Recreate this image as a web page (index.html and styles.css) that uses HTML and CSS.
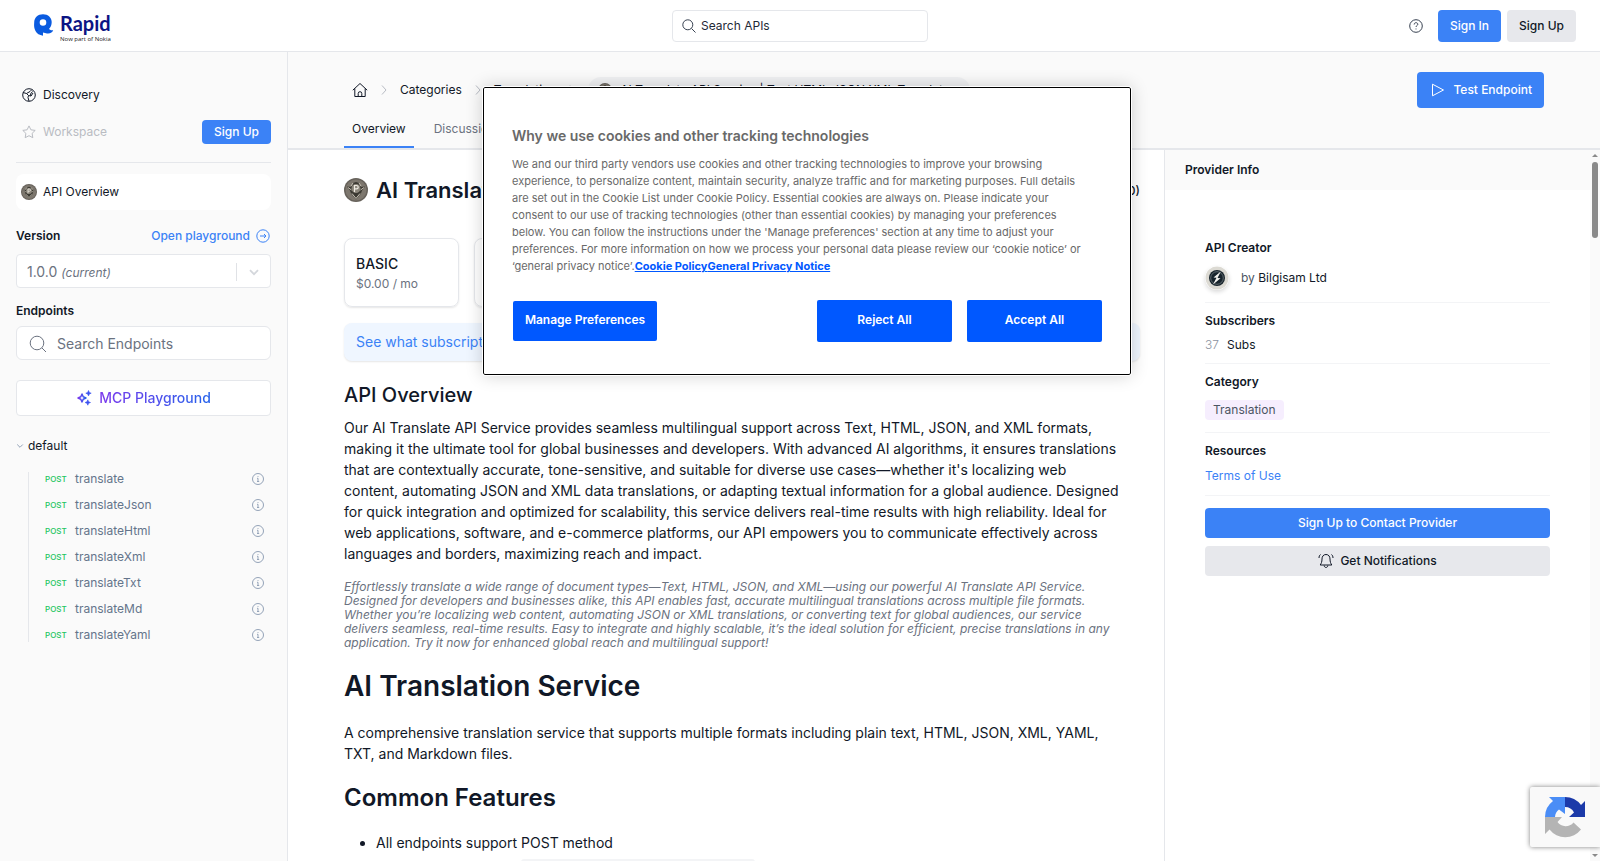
FILE: index.html
```html
<!DOCTYPE html>
<html lang="en">
<head>
<meta charset="utf-8">
<title>AI Translate API Service</title>
<link rel="stylesheet" href="styles.css">
</head>
<body>
<svg class="sprite" aria-hidden="true">
  <symbol id="info" viewBox="0 0 14 14"><circle cx="7" cy="7" r="5.5"/><path d="M6 6.300h1v3M6 9.500h2.200M7 4.200v.8"/></symbol>
  <symbol id="medal" viewBox="0 0 24 24"><circle cx="12" cy="12" r="12" fill="#67625b"/><circle cx="12" cy="12" r="10.500" fill="#7d776e"/><path d="M3 8.500l4 .5 2-4 3-1 3 1 2 4 4-.5-3 4-1 3-5 6-5-6-1-3z" fill="#3b3932"/><path d="M4 9.500l3.500 2.500M20 9.500L16.500 12M12 20.500l-4-5M12 20.500l4-5M7 8l2-3M17 8l-2-3" stroke="#c9c3b6" fill="none"/><circle cx="12" cy="10.500" r="4.500" fill="#8b867b"/><path d="M10.500 14V7.500h2a1.600 1.600 0 010 3.400h-2" stroke="#efebe2" stroke-width="1.200" fill="none"/></symbol>
  <symbol id="chev" viewBox="0 0 8 12"><path d="M2 1.500L6 6 2 10.500"/></symbol>
</svg>
<header class="topbar">
  <a class="logo" href="#" aria-label="Rapid">
    <svg width="20" height="22" viewBox="0 0 20 22"><path fill="#0a5be0" fill-rule="evenodd" d="M1.500 17C-.5 13 .2 10 .2 8.500.2 3.500 3.800.2 9 .2c5.200 0 8.700 3.500 8.700 7.800 0 3-1 5.300-2.700 7 1.200 1.200 2.600 1.500 4.200 1.200-.6 2.200-3 3.600-6.200 3.200L9 18.500v3.300C5.500 21 2.800 19.800 1.500 17zM9 5.200a3.300 3.300 0 100 6.600 3.300 3.300 0 000-6.600z"/></svg>
    <span class="logo-text"><b>Rapid</b><small>Now part of Nokia</small></span>
  </a>
  <label class="top-search">
    <svg width="16" height="16" viewBox="0 0 16 16"><circle cx="6.800" cy="6.800" r="5"/><path d="M10.500 10.500l4 4"/></svg>
    <input type="text" placeholder="Search APIs" aria-label="Search APIs">
  </label>
  <div class="top-actions">
    <svg class="help" width="16" height="16" viewBox="0 0 16 16"><circle cx="8" cy="8" r="6.300"/><path d="M6.200 6.500c0-1.200.8-1.800 1.800-1.800s1.800.6 1.800 1.600c0 1.300-1.800 1.300-1.800 2.700M8 10.500v.9"/></svg>
    <button class="btn blue">Sign In</button>
    <button class="btn grey">Sign Up</button>
  </div>
</header>
<div class="shell">
  <aside class="sidebar">
    <a class="side-row" href="#">
      <svg class="line" width="14" height="14" viewBox="0 0 14 14"><circle cx="7" cy="7" r="6.300"/><path d="M1 4.500l3.500 1 2 2-.5 2L7 13M4.500 5.500L8 3.500 10 1.500M10.500 3.500L8.500 6l.5 2M6.500 7.500L9 8l2-3"/></svg>Discovery</a>
    <div class="side-row muted">
      <svg class="line" width="14" height="14" viewBox="0 0 14 14"><path d="M7 .9l1.900 3.900 4.300.6-3.100 3 .7 4.300L7 10.700l-3.800 2 .7-4.300-3.100-3 4.300-.6z"/></svg>Workspace
      <button class="btn blue small">Sign Up</button></div>
    <hr>
    <a class="side-card" href="#"><svg width="16" height="16"><use href="#medal"/></svg>API Overview</a>
    <div class="version-head"><label for="ver">Version</label>
      <a href="#">Open playground <svg class="line" width="14" height="14" viewBox="0 0 14 14"><circle cx="7" cy="7" r="6.200"/><path d="M4 7h6M8 5l2 2-2 2"/></svg></a></div>
    <button class="select" id="ver"><span>1.0.0 <i>(current)</i></span><span class="bar"></span><svg width="10" height="7" viewBox="0 0 10 7"><path d="M1 1.200l4 4 4-4" stroke-width="1.800"/></svg></button>
    <label class="ep-label" for="eps">Endpoints</label>
    <div class="ep-search"><svg class="line" width="18" height="18" viewBox="0 0 18 18"><circle cx="8" cy="8" r="6.800"/><path d="M13 13l4 4"/></svg><input id="eps" type="text" placeholder="Search Endpoints"></div>
    <button class="mcp"><svg width="16" height="16" viewBox="0 0 16 16"><defs><linearGradient id="g"><stop stop-color="#7c3aed"/><stop offset="1" stop-color="#2563eb"/></linearGradient></defs><path fill="none" stroke="url(#g)" stroke-width="1.500" stroke-linejoin="round" d="M6 4l1.200 2.800L10 8 7.200 9.200 6 12 4.800 9.200 2 8l2.800-1.200z"/><path fill="#3a52f0" d="M12.500.5l.8 1.900 1.900.8-1.900.8-.8 1.900-.8-1.900-1.900-.8 1.900-.8zM11.800 9.800l.8 1.900 1.900.8-1.900.8-.8 1.900-.8-1.900-1.900-.8 1.900-.8z" stroke="#3a52f0" stroke-width=".6"/></svg><span>MCP Playground</span></button>
    <div class="group"><svg width="8" height="6" viewBox="0 0 8 6"><path d="M1.200 1.500L4 4.300l2.800-2.800"/></svg>default</div>
    <ul class="endpoints">
      <li><b>POST</b><a href="#">translate</a><svg width="14" height="14"><use href="#info"/></svg></li>
      <li><b>POST</b><a href="#">translateJson</a><svg width="14" height="14"><use href="#info"/></svg></li>
      <li><b>POST</b><a href="#">translateHtml</a><svg width="14" height="14"><use href="#info"/></svg></li>
      <li><b>POST</b><a href="#">translateXml</a><svg width="14" height="14"><use href="#info"/></svg></li>
      <li><b>POST</b><a href="#">translateTxt</a><svg width="14" height="14"><use href="#info"/></svg></li>
      <li><b>POST</b><a href="#">translateMd</a><svg width="14" height="14"><use href="#info"/></svg></li>
      <li><b>POST</b><a href="#">translateYaml</a><svg width="14" height="14"><use href="#info"/></svg></li>
    </ul>
  </aside>
  <div class="page">
    <div class="page-head">
      <div class="crumb-row">
        <nav class="crumbs">
          <svg class="line" width="16" height="16" viewBox="0 0 16 16"><path d="M.8 8.200L8 1.500l7.200 6.700M2.800 6.500v8h10.400v-8M6.200 14.500v-3a1.800 1.800 0 013.600 0v3"/></svg>
          <svg class="chev" width="8" height="12"><use href="#chev"/></svg>
          <a href="#">Categories</a>
          <svg class="chev" width="8" height="12"><use href="#chev"/></svg>
          <a href="#">Translation</a>
          <svg class="chev" width="8" height="12"><use href="#chev"/></svg>
          <span class="pill"><svg width="14" height="14"><use href="#medal"/></svg>AI Translate API Service | Text HTML JSON XML Translate</span>
        </nav>
        <button class="btn blue test"><svg width="14" height="14" viewBox="0 0 14 14"><path d="M1.500 1.200v11.600L12.500 7z"/></svg>Test Endpoint</button>
      </div>
      <nav class="tabs"><a class="on" href="#">Overview</a><a href="#">Discussions</a></nav>
    </div>
    <div class="columns">
      <main class="main">
        <div class="title"><svg width="24" height="24"><use href="#medal"/></svg><h1>AI Translate API Service</h1><span>(0)</span></div>
        <div class="plans">
          <div class="plan"><strong>BASIC</strong><span>$0.00 / mo</span></div>
          <div class="plan"><strong>PRO</strong><span>$9.99 / mo</span></div>
        </div>
        <a class="banner" href="#">See what subscription plan is right for you</a>
        <h2 class="over">API Overview</h2>
        <p>Our AI Translate API Service provides seamless multilingual support across Text, HTML, JSON, and XML formats, making it the ultimate tool for global businesses and developers. With advanced AI algorithms, it ensures translations that are contextually accurate, tone-sensitive, and suitable for diverse use cases—whether it's localizing web content, automating JSON and XML data translations, or adapting textual information for a global audience. Designed for quick integration and optimized for scalability, this service delivers real-time results with high reliability. Ideal for web applications, software, and e-commerce platforms, our API empowers you to communicate effectively across languages and borders, maximizing reach and impact.</p>
        <p class="note">Effortlessly translate a wide range of document types—Text, HTML, JSON, and XML—using our powerful AI Translate API Service. Designed for developers and businesses alike, this API enables fast, accurate multilingual translations across multiple file formats. Whether you’re localizing web content, automating JSON or XML translations, or converting text for global audiences, our service delivers seamless, real-time results. Easy to integrate and highly scalable, it’s the ideal solution for efficient, precise translations in any application. Try it now for enhanced global reach and multilingual support!</p>
        <h2 class="doc1">AI Translation Service</h2>
        <p>A comprehensive translation service that supports multiple formats including plain text, HTML, JSON, XML, YAML, TXT, and Markdown files.</p>
        <h3 class="doc2">Common Features</h3>
        <ul class="features"><li>All endpoints support POST method</li><li>Request content type <code>Content-Type: application/json</code></li></ul>
      </main>
      <aside class="provider">
        <h2>Provider Info</h2>
        <div class="info">
          <section><h3>API Creator</h3><div class="by"><svg width="24" height="24" viewBox="0 0 24 24"><circle cx="12" cy="12" r="11.500" fill="#dcdad3"/><circle cx="12" cy="12" r="8" fill="#18242c"/><circle cx="12" cy="12" r="6.300" fill="none" stroke="#7d868a" stroke-width=".7"/><path d="M15.800 5.500L8.500 11.500l3 .3L8 18.500l7.500-6.300-3-.3z" fill="#f3f2ee"/></svg><span>by <b>Bilgisam Ltd</b></span></div></section>
          <section><h3>Subscribers</h3><div class="subs"><span>37</span>Subs</div></section>
          <section><h3>Category</h3><a class="tag" href="#">Translation</a></section>
          <section><h3>Resources</h3><a class="terms" href="#">Terms of Use</a></section>
          <button class="btn blue wide">Sign Up to Contact Provider</button>
          <button class="btn grey wide"><svg class="line" width="16" height="16" viewBox="0 0 16 16"><path d="M8 1.500c-2.600 0-4 2-4 4.500 0 3-.8 4.500-1.800 6h11.600c-1-1.500-1.800-3-1.800-6 0-2.500-1.400-4.500-4-4.500zM6.200 12.500c0 2.600 3.600 2.600 3.600 0M2.500 1.500C1.500 2.300 1 3.500 1 5M13.500 1.500C14.500 2.300 15 3.500 15 5"/></svg>Get Notifications</button>
        </div>
      </aside>
      <div class="scroll"><i class="up"></i><i class="thumb"></i><i class="down"></i></div>
    </div>
  </div>
</div>
<div class="cookie" role="dialog" aria-labelledby="ck">
  <h2 id="ck">Why we use cookies and other tracking technologies</h2>
  <p>We and our third party vendors use cookies and other tracking technologies to improve your browsing experience, to personalize content, maintain security, analyze traffic and for marketing purposes. Full details are set out in the Cookie List under Cookie Policy. Essential cookies are always on. Please indicate your consent to our use of tracking technologies (other than essential cookies) by managing your preferences below. You can follow the instructions under the 'Manage preferences' section at any time to adjust your preferences. For more information on how we process your personal data please review our ‘cookie notice’ or ‘general privacy notice’.<a href="#">Cookie Policy</a><a href="#">General Privacy Notice</a></p>
  <div class="ck-actions"><button class="manage">Manage Preferences</button><button>Reject All</button><button>Accept All</button></div>
</div>
<div class="captcha"><svg width="42" height="42" viewBox="0 0 42 42"><path fill="#1c3aa9" d="M20 0A20 20 0 0136 8L40 4V20H24L29 15.500A10 10 0 0020 10z"/><path fill="#4a8df6" d="M20 0H4L8 4A20 20 0 000 20H10A10 10 0 0114 12.500L20 17z"/><path fill="#b4b4b4" d="M0 20V37L4.500 32.500A20 20 0 0036 32.500L28.500 25.500A10 10 0 0112.500 25L17 20z"/></svg></div>
</body>
</html>
```
FILE: styles.css
```css
* { box-sizing: border-box; }
body { margin: 0; height: 100vh; overflow: hidden; display: flex; flex-direction: column; font: 12px/20px Inter, "Liberation Sans", sans-serif; color: #111827; background: #fff; }
h1, h2, h3, p, ul { margin: 0; padding: 0; }
ul { list-style: none; }
a { color: inherit; text-decoration: none; }
button, input { font: inherit; color: inherit; }
input { border: 0; outline: 0; padding: 0; background: none; width: 100%; min-width: 0; }
svg { flex: none; display: block; }
.sprite { position: absolute; width: 0; height: 0; }
.line { fill: none; stroke: currentColor; stroke-width: 1; stroke-linejoin: round; }

.topbar { flex: none; display: grid; grid-template-columns: 1fr 256px 1fr; align-items: center; height: 52px; padding: 0 24px; border-bottom: 1px solid #e5e7eb; }
.logo { display: flex; gap: 6px; padding: 3px 0 0 10px; }
.logo svg { margin-top: 3px; }
.logo-text { display: flex; flex-direction: column; color: #0c1484; }
.logo-text b { font: 700 20px/24px Lato, sans-serif; }
.logo-text small { font: 6px/8px "Open Sans", sans-serif; color: #222; }
.top-search { display: flex; align-items: center; gap: 4px; height: 32px; padding: 0 8px; border: 1px solid #e5e7eb; border-radius: 4px; }
.top-search svg { fill: none; stroke: #374151; }
.top-search input::placeholder { color: #1f2937; }
.top-actions { display: flex; align-items: center; justify-content: flex-end; gap: 6px; }
.help { fill: none; stroke: #374151; margin-right: 8px; }
.btn { display: flex; align-items: center; justify-content: center; height: 32px; padding: 0 12px; border: 0; border-radius: 4px; font-weight: 500; white-space: nowrap; }
.blue { background: #3b82f6; color: #fff; }
.grey { background: #e7e8ec; color: #111827; }
.small { height: 24px; margin-left: auto; }

.shell { flex: 1; min-height: 0; display: flex; }
.sidebar { flex: none; width: 288px; padding: 24px 16px; background: #fafafa; border-right: 1px solid #e5e7eb; }
.side-row { display: flex; align-items: center; gap: 7px; height: 38px; padding-left: 6px; }
.side-row:first-child { height: 37px; }
.muted { color: #b9bcc2; }
hr { margin: 11px 0; border: 0; border-top: 1px solid #e5e7eb; }
.side-card { display: flex; align-items: center; gap: 6px; height: 36px; padding-left: 5px; background: #fff; border-radius: 8px; }
.version-head { display: flex; justify-content: space-between; margin-top: 16px; font-weight: 600; }
.version-head a { display: flex; align-items: center; gap: 6px; color: #3b82f6; font-weight: 500; padding-right: 1px; }
.select { display: flex; align-items: center; width: 100%; height: 34px; margin: 8px 0 12px; padding: 2px 11px 0 10px; background: #fff; border: 1px solid #e5e7eb; border-radius: 4px; font-size: 14px; color: #6b7280; text-align: left; }
.select i { font-size: 12px; }
.select svg { fill: none; stroke: #d4d7dc; }
.bar { width: 1px; height: 18px; margin: 0 12px 0 auto; background: #e0e2e6; }
.ep-label { display: block; font-weight: 600; line-height: 22px; }
.ep-search { display: flex; align-items: center; gap: 10px; height: 34px; margin: 4px 0 20px; padding: 1px 12px 0; background: #fff; border: 1px solid #e5e7eb; border-radius: 6px; font-size: 14px; color: #6b7280; }
.ep-search input::placeholder { color: #6b7280; }
.mcp { display: flex; align-items: center; justify-content: center; gap: 7px; width: 100%; height: 36px; background: #fff; border: 1px solid #e5e7eb; border-radius: 4px; font-size: 14px; font-weight: 500; }
.mcp span { background: linear-gradient(90deg, #7c3aed, #2563eb); background-clip: text; color: transparent; }
.group { display: flex; align-items: center; gap: 4px; margin-top: 20px; }
.group svg, .endpoints svg { fill: none; stroke: #94a3b8; }
.endpoints { margin: 16px 0 0 12px; border-left: 1px solid #e5e7eb; padding-right: 6px; height: 170px; }
.endpoints li { display: flex; align-items: center; height: 14px; margin-bottom: 12px; padding-left: 16px; color: #64748b; }
.endpoints b { width: 30px; font-size: 8px; font-weight: 500; color: #22c55e; }
.endpoints svg { margin-left: auto; }

.page { flex: 1; min-width: 0; display: flex; flex-direction: column; }
.page-head { flex: none; display: flex; flex-direction: column; height: 98px; padding: 20px 56px 0; background: #fafafa; border-bottom: 2px solid #e5e7eb; }
.crumb-row { display: flex; align-items: center; justify-content: space-between; height: 36px; }
.crumbs { display: flex; align-items: center; gap: 12px; padding-left: 8px; white-space: nowrap; }
.chev { fill: none; stroke: #b8bcc4; }
.pill { display: flex; align-items: center; gap: 8px; height: 26px; padding: 0 20px 0 10px; background: #f0f1f3; border-radius: 13px; }
.test { height: 36px; gap: 8px; padding: 0 12px 0 14px; }
.test svg { fill: none; stroke: #fff; stroke-linejoin: round; }
.tabs { display: flex; gap: 12px; margin-top: auto; }
.tabs a { height: 29px; padding: 0 8px; color: #6b7280; }
.tabs .on { color: #111827; border-bottom: 2px solid #3b82f6; }

.columns { flex: 1; min-height: 0; display: flex; }
.main { flex: 1; min-width: 0; padding: 27px 24px 0 56px; overflow: hidden; font-size: 14px; line-height: 21px; }
.main p { padding-right: 20px; }
.title { display: flex; align-items: center; gap: 8px; height: 26px; }
.title h1 { font-size: 22px; font-weight: 600; }
.title span { margin-left: auto; font-size: 12px; font-weight: 500; }
.plans { display: flex; gap: 15px; margin: 35px 0 16px; }
.plan { display: flex; flex-direction: column; width: 115px; height: 69px; padding: 15px 11px; border: 1px solid #e5e7eb; border-radius: 8px; box-shadow: 0 1px 2px #0000001a; line-height: 20px; }
.plan strong { font-weight: 500; }
.plan span { font-size: 12px; color: #6b7280; }
.banner { display: block; height: 38px; padding: 0 12px; line-height: 37px; background: #eff6ff; color: #3b82f6; border-radius: 8px; box-shadow: 0 1px 2px #0000001a; }
.over { margin: 20px 0 8px; font-size: 20px; line-height: 28px; font-weight: 500; }
.main .note { margin: 16px 0 18px; font-size: 12px; line-height: 14px; font-style: italic; color: #6b7280; }
.doc1 { margin-bottom: 18px; font-size: 28px; line-height: 36px; font-weight: 600; }
.doc2 { margin: 18px 0 18px; font-size: 24px; line-height: 32px; font-weight: 600; }
.features { list-style: disc; padding-left: 32px; }
.features li { margin-bottom: 4px; }
.features code { padding: 4px 9px; background: #f3f4f6; border-radius: 3px; font: 12px/16px "Liberation Mono", monospace; }

.provider { flex: none; width: 426px; border-left: 1px solid #e5e7eb; }
.provider h2 { height: 40px; padding: 0 20px; line-height: 40px; background: #fafafa; font-size: 12px; font-weight: 600; }
.info { padding: 36px 40px 0; }
.info section { padding: 8px 0; border-bottom: 1px solid #f3f4f6; }
.info h3 { font-size: 12px; font-weight: 600; }
.info section:first-child { padding: 12px 0; }
.by { display: flex; align-items: center; gap: 12px; margin-top: 8px; color: #4b5563; }
.by svg { border-radius: 50%; box-shadow: 0 2px 4px #00000026; }
.by b { font-weight: 400; color: #111827; }
.subs { display: flex; gap: 8px; margin-top: 4px; }
.subs span { color: #8b92a0; font-weight: 300; }
.tag { display: block; width: fit-content; margin: 8px 0 4px; padding: 0 8px; background: #f6eefe; border-radius: 4px; color: #4b5563; }
.terms { display: block; margin: 5px 0 1px; color: #3b82f6; }
.wide { width: 100%; height: 30px; gap: 6px; margin-top: 8px; }
.info section + .wide { margin-top: 12px; }
.scroll { flex: none; width: 10px; display: flex; flex-direction: column; align-items: center; padding: 4px 0; background: #fafafa; }
.up, .down { border: 3px solid transparent; }
.up { border-top: 0; border-bottom: 3px solid #8a8a8a; }
.down { border-bottom: 0; border-top: 3px solid #8a8a8a; margin-top: auto; }
.thumb { width: 6px; height: 76px; margin-top: 5px; background: #8a8a8a; border-radius: 3px; }

.cookie { position: absolute; left: 483px; top: 87px; width: 648px; padding: 37px 28px 32px; background: #fff; border: 1px solid #000; border-radius: 2px; outline: 1px solid #fff; box-shadow: 0 0 18px #00000033; color: #696969; }
.cookie h2 { font-size: 14px; line-height: 22px; font-weight: 600; }
.cookie p { margin-top: 9px; padding-right: 16px; font-size: 11px; line-height: 17px; }
.cookie p a { color: #0058ff; font-weight: 700; text-decoration: underline; }
.ck-actions { display: flex; align-items: center; gap: 15px; margin-top: 25px; }
.ck-actions button { width: 135px; height: 42px; padding: 0 0 2px; background: #0058ff; color: #fff; border: 0; border-radius: 2px; font-size: 12px; font-weight: 600; }
.ck-actions .manage { width: 144px; height: 40px; margin-right: auto; margin-left: 1px; }
.captcha { position: absolute; right: 0; bottom: 14px; width: 70px; height: 60px; padding: 10px 15px; background: #f9f9f9; border-radius: 2px 0 0 2px; box-shadow: 0 0 5px #808080; }
```
